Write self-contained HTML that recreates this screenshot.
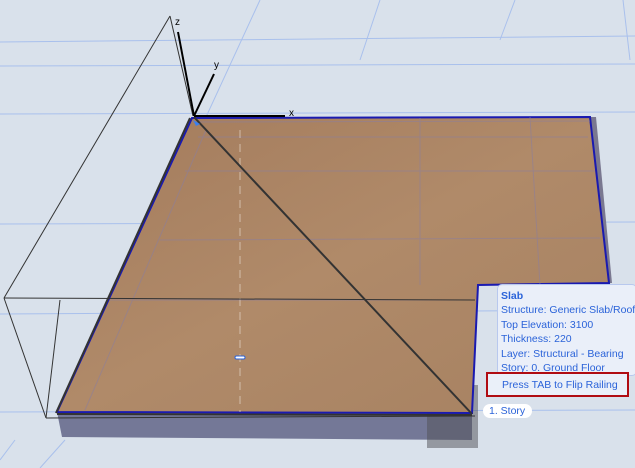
<!DOCTYPE html>
<html><head><meta charset="utf-8"><style>
body{margin:0;width:635px;height:468px;overflow:hidden;background:#d9e1eb;position:relative;font-family:"Liberation Sans","DejaVu Sans",sans-serif}
svg{position:absolute;left:0;top:0}
.tip{position:absolute;left:497px;top:284px;width:140px;height:92px;background:rgba(235,240,250,0.93);border:1px solid #b8c8ee;border-radius:5px;color:#2b63d9;font-size:10.5px;line-height:14.4px;padding:4px 0 0 3px;box-sizing:border-box;white-space:nowrap;overflow:hidden}
.red{position:absolute;left:486px;top:372px;width:143px;height:25px;border:2px solid #b00c12;box-sizing:border-box;background:rgba(235,240,250,0.95);color:#2b63d9;font-size:10.5px;padding:5px 0 0 14px;white-space:nowrap}
.pill{position:absolute;left:483px;top:404px;width:49px;height:14px;background:#fff;border-radius:7px;color:#2b63d9;font-size:10.5px;line-height:14px;padding-left:6px;box-sizing:border-box}
</style></head><body>
<svg width="635" height="468" viewBox="0 0 635 468">
<defs>
<linearGradient id="w" x1="0" y1="0" x2="1" y2="1">
<stop offset="0" stop-color="#a37b5c"/><stop offset="0.5" stop-color="#b08a69"/><stop offset="1" stop-color="#a68161"/>
</linearGradient>
</defs>
<g stroke="#a9c0ec" stroke-width="1" fill="none">
<line x1="0" y1="42" x2="635" y2="36"/><line x1="0" y1="66" x2="635" y2="64"/>
<line x1="0" y1="114" x2="635" y2="112"/><line x1="0" y1="224" x2="635" y2="222"/>
<line x1="0" y1="314" x2="635" y2="310"/><line x1="0" y1="412" x2="635" y2="410"/>
<line x1="260" y1="0" x2="200" y2="130"/><line x1="380" y1="0" x2="360" y2="60"/>
<line x1="515" y1="0" x2="500" y2="40"/><line x1="623" y1="0" x2="630" y2="60"/>
<line x1="65" y1="440" x2="40" y2="468"/><line x1="15" y1="440" x2="0" y2="460"/>
</g>
<polygon points="57,412 472,413 472,440 62,437" fill="#747897"/>
<polygon points="590,117 609,283 612,283 596,117" fill="#7a7890"/>
<polygon points="427,385 478,385 478,448 427,448" fill="rgba(80,80,85,0.5)"/>
<polygon points="192,118 590,117 609,283 478,285 472,413 57,412" fill="url(#w)" stroke="#1a1ab0" stroke-width="2"/>
<g stroke="#8a7ea0" stroke-width="1" fill="none" opacity="0.55">
<line x1="192" y1="122" x2="590" y2="121"/><line x1="198" y1="137" x2="588" y2="137"/>
<line x1="185" y1="171" x2="595" y2="171"/><line x1="160" y1="240" x2="600" y2="238"/>
<line x1="110" y1="300" x2="475" y2="300"/><line x1="206" y1="130" x2="85" y2="410"/>
<line x1="420" y1="118" x2="420" y2="285"/><line x1="530" y1="117" x2="540" y2="285"/>
</g>
<line x1="240" y1="130" x2="240" y2="412" stroke="#e4d6c8" stroke-width="1" stroke-dasharray="8,6" opacity="0.7"/>
<g stroke="#333" stroke-width="1" fill="none">
<line x1="170" y1="16" x2="4" y2="298"/><line x1="170" y1="16" x2="193" y2="116"/>
<line x1="4" y1="298" x2="46" y2="418"/><line x1="46" y1="418" x2="475" y2="416"/>
<line x1="4" y1="298" x2="475" y2="300"/><line x1="60" y1="300" x2="46" y2="418"/>
<line x1="190" y1="118" x2="56" y2="413" stroke-width="2"/>
<line x1="194" y1="117" x2="472" y2="414" stroke-width="2"/>
<line x1="57" y1="414" x2="472" y2="415" stroke-width="2"/>
</g>
<g stroke="#000" stroke-width="2">
<line x1="178" y1="32" x2="194" y2="116"/><line x1="194" y1="116" x2="214" y2="74"/>
<line x1="194" y1="116" x2="285" y2="116"/>
</g>
<polygon points="193,120 200,124 196,126" fill="#3a7ff0"/>
<rect x="235" y="356" width="10" height="3" rx="1.5" fill="#fff" stroke="#2b63d9"/>
<g font-family="Liberation Sans,sans-serif" font-size="10" fill="#000">
<text x="175" y="25">z</text><text x="214" y="68">y</text><text x="289" y="116">x</text>
</g>
</svg>
<div class="tip"><b>Slab</b><br>Structure: Generic Slab/Roof<br>Top Elevation: 3100<br>Thickness: 220<br>Layer: Structural - Bearing<br>Story: 0. Ground Floor</div>
<div class="red">Press TAB to Flip Railing</div>
<div class="pill">1. Story</div>
</body></html>
